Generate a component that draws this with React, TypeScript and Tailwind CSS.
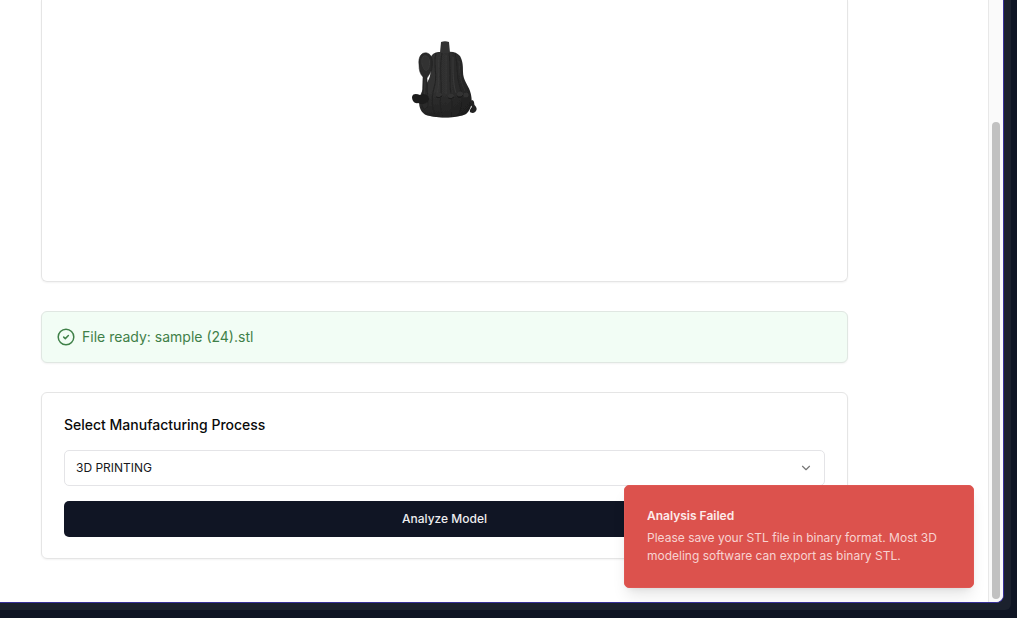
import { useState } from "react";
import { ChevronDown } from "lucide-react";

function ModelPreview() {
  return (
    <svg viewBox="0 0 90 100" className="h-[100px] w-[90px]" role="img" aria-label="3D model preview">
      <defs>
        <linearGradient id="body" x1="0" y1="0" x2="1" y2="0">
          <stop offset="0" stopColor="#323232" />
          <stop offset="0.55" stopColor="#2f2f2f" />
          <stop offset="1" stopColor="#222222" />
        </linearGradient>
        <linearGradient id="base" x1="0" y1="0" x2="0" y2="1">
          <stop offset="0.6" stopColor="#151515" stopOpacity="0" />
          <stop offset="1" stopColor="#151515" stopOpacity="0.55" />
        </linearGradient>
        <filter id="soft" x="-10%" y="-10%" width="120%" height="120%">
          <feGaussianBlur stdDeviation="0.4" />
        </filter>
      </defs>
      <g filter="url(#soft)">
        <path d="M69 72C74 68 74 72 74.500 75C78 78 77 82 73 83C69 83 69 80 72 77Z" fill="#202020" />
        <path d="M32 25C35 21 41 22 46 22C52 21 57 22 60 26C63 31 63 37 63 42C63 50 68 55 70 61C73 70 72 79 66 84C58 88.500 34 88.500 25 84.500C20 81 18 75 20 68C21 59 28 54 30 46C32 38 28 30 32 25Z" fill="url(#body)" />
        <path d="M32 25C35 21 41 22 46 22C52 21 57 22 60 26C63 31 63 37 63 42C63 50 68 55 70 61C73 70 72 79 66 84C58 88.500 34 88.500 25 84.500C20 81 18 75 20 68C21 59 28 54 30 46C32 38 28 30 32 25Z" fill="url(#base)" />
        <path d="M41 12Q45 10.500 49 12L50 23H40Z" fill="#303030" />
        <g fill="none" stroke="#1e1e1e" strokeWidth="0.7">
          <path d="M36 23C33 34 38 46 34 58C31 69 32 79 36 87" />
          <path d="M42 23C39 39 42 53 41 64C39 75 41 82 43 87" />
          <path d="M49 23C51 39 49 53 51 64C53 75 52 82 51 87" />
          <path d="M55 23C58 35 56 45 60 57C64 69 61 80 58 86" />
        </g>
        <g fill="none" stroke="#393939" strokeWidth="1">
          <path d="M39 27C37 42 40 54 37 64" />
          <path d="M46 25V64" />
          <path d="M53 27C53 44 53 54 56 63" />
          <path d="M59 31C60 44 60 50 65 61" strokeOpacity="0.5" />
        </g>
        <path d="M19 35C18 26 22 22 27 23C32 24 33 31 32 38C31 42 29 45 27 48L28 76C26 80 23 80 22 76L23 47C20 44 19 40 19 35Z" fill="#292929" stroke="#1e1e1e" strokeWidth="0.5" />
        <path d="M22 34C21 28 23 25 26 26C30 27 30 33 29 37C28 42 24 42 22 34Z" fill="#303030" stroke="#414141" strokeWidth="0.6" />
        <path d="M25 49L24.500 74" stroke="#393939" strokeWidth="0.8" />
        <path d="M12 67C13 63 17 64 20 65C25 63 29 65 29 69C28 74 22 75 18 73C15 74 12 71 12 67Z" fill="#1d1d1d" />
        <g fill="#323232">
          <ellipse cx="39" cy="65" rx="3" ry="2.500" />
          <ellipse cx="51" cy="66" rx="3" ry="2.500" />
          <ellipse cx="60" cy="64" rx="3" ry="2.500" />
          <ellipse cx="66" cy="65" rx="2.500" ry="2.500" />
        </g>
        <g fill="none" stroke="#171717" strokeWidth="0.8">
          <path d="M36 67Q39 69 42 66" />
          <path d="M48 68Q51 70 54 67" />
          <path d="M57 66Q60 69 63 65" />
        </g>
      </g>
    </svg>
  );
}

function ReadyIcon() {
  return (
    <svg viewBox="0 0 18 18" className="size-[18px] shrink-0" fill="none" stroke="currentColor" strokeWidth="1.5" strokeLinecap="round" strokeLinejoin="round" aria-hidden="true">
      <circle cx="9" cy="9" r="7.800" />
      <path d="M6.700 9.100L8.300 10.600L11.400 7.500" />
    </svg>
  );
}

export default function App() {
  const [process, setProcess] = useState("3d");

  return (
    <div className="flex h-screen overflow-hidden bg-[#0f1524] pr-1.5 pb-2 font-['Inter',sans-serif] text-[#0a0a0a]">
      <div className="flex min-w-0 flex-1 rounded-br-md bg-[#1b212e] pr-[7px] pb-[7px]">
        <div className="relative flex min-w-0 flex-1 overflow-hidden rounded-br-lg border-r border-b border-[#37309a] bg-white">
          <main className="flex min-w-0 flex-1 flex-col gap-[29px] pr-[140px] pl-[41px]">
            <section className="flex h-[282px] shrink-0 justify-center rounded-b-md border border-t-0 border-[#e5e5e5] pt-[30px] shadow-xs">
              <ModelPreview />
            </section>

            <section role="status" className="flex h-[52px] shrink-0 items-center gap-[7px] rounded-md border border-[#e0e7e2] bg-[#f2fdf5] px-[15px] text-[#3f8048] shadow-xs">
              <ReadyIcon />
              <p className="text-sm">File ready: sample (24).stl</p>
            </section>

            <section className="flex shrink-0 flex-col rounded-md border border-[#e5e5e5] px-[22px] pt-[22px] pb-[21px] shadow-xs">
              <label htmlFor="process" className="mb-[15px] text-sm leading-5 font-medium">
                Select Manufacturing Process
              </label>
              <div className="relative mb-[15px]">
                <select
                  id="process"
                  value={process}
                  onChange={(event) => setProcess(event.target.value)}
                  className="block h-9 w-full appearance-none rounded-[5px] border border-[#e4e4e7] bg-white px-[11px] text-xs text-[#18181b]"
                >
                  <option value="3d">3D PRINTING</option>
                </select>
                <ChevronDown className="pointer-events-none absolute top-[11px] right-3 size-3.5 text-[#777777]" aria-hidden="true" />
              </div>
              <button type="button" className="h-9 rounded-[5px] bg-[#101524] text-xs font-medium text-[#eeeef0]">
                Analyze Model
              </button>
            </section>
          </main>

          <div className="w-[15px] shrink-0 border-l border-[#e8e8e8] bg-[#fafafa] px-[3px] pt-[122px] pb-[3px]" aria-hidden="true">
            <div className="h-full w-2 rounded-full bg-[#c1c1c1]" />
          </div>

          <aside role="alert" className="absolute right-[29px] bottom-3.5 w-[350px] rounded-[5px] border border-[#df5753] bg-[#dc524d] px-[22px] pt-[21px] pb-[22px] shadow-lg">
            <h2 className="text-xs leading-[18px] font-semibold text-[#fceceb]">Analysis Failed</h2>
            <p className="mt-1 text-xs leading-[18px] text-[#f8d2d1]">
              Please save your STL file in binary format. Most 3D modeling software can export as binary STL.
            </p>
          </aside>
        </div>
      </div>
    </div>
  );
}
